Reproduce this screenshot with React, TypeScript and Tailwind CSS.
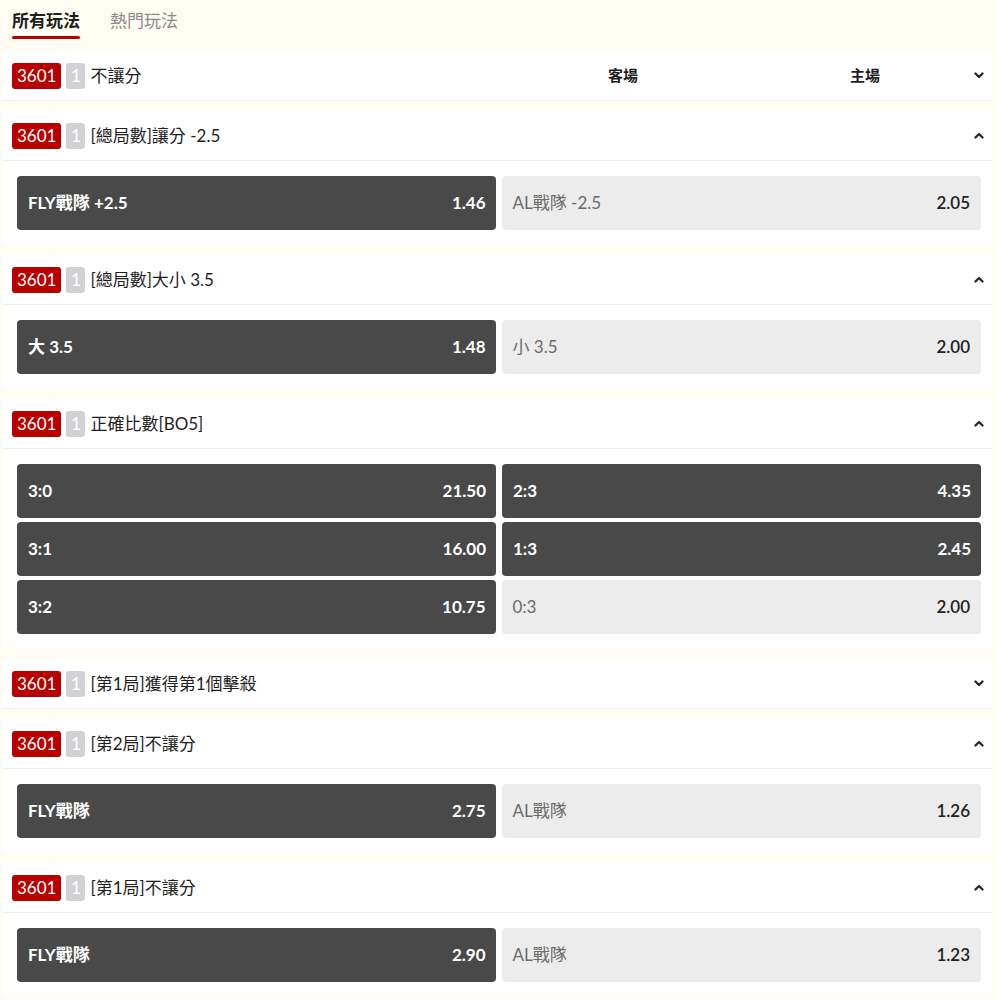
import React from 'react';

type Odd = { label: string; odds: string; active: boolean };
type Market = { title: string; open: boolean; rows?: Odd[][] };

const markets: Market[] = [
  { title: '不讓分', open: false },
  {
    title: '[總局數]讓分 -2.5',
    open: true,
    rows: [[{ label: 'FLY戰隊 +2.5', odds: '1.46', active: true }, { label: 'AL戰隊 -2.5', odds: '2.05', active: false }]],
  },
  {
    title: '[總局數]大小 3.5',
    open: true,
    rows: [[{ label: '大 3.5', odds: '1.48', active: true }, { label: '小 3.5', odds: '2.00', active: false }]],
  },
  {
    title: '正確比數[BO5]',
    open: true,
    rows: [
      [{ label: '3:0', odds: '21.50', active: true }, { label: '2:3', odds: '4.35', active: true }],
      [{ label: '3:1', odds: '16.00', active: true }, { label: '1:3', odds: '2.45', active: true }],
      [{ label: '3:2', odds: '10.75', active: true }, { label: '0:3', odds: '2.00', active: false }],
    ],
  },
  { title: '[第1局]獲得第1個擊殺', open: false },
  {
    title: '[第2局]不讓分',
    open: true,
    rows: [[{ label: 'FLY戰隊', odds: '2.75', active: true }, { label: 'AL戰隊', odds: '1.26', active: false }]],
  },
  {
    title: '[第1局]不讓分',
    open: true,
    rows: [[{ label: 'FLY戰隊', odds: '2.90', active: true }, { label: 'AL戰隊', odds: '1.23', active: false }]],
  },
];

const Chevron = ({ up }: { up: boolean }) => (
  <svg width="10" height="7" viewBox="0 0 10 7" className="shrink-0">
    <polyline
      points={up ? '1.5,5.5 5,2 8.5,5.5' : '1.5,1.5 5,5 8.5,1.5'}
      fill="none"
      stroke="#2a2a2a"
      strokeWidth="2.4"
      strokeLinecap="round"
      strokeLinejoin="round"
    />
  </svg>
);

const OddButton = ({ item }: { item: Odd }) => (
  <button
    className={
      item.active
        ? 'flex-1 h-[54px] rounded-[4px] bg-[#494949] flex items-center justify-between pl-[11px] pr-[10px] text-white font-bold'
        : 'flex-1 h-[54px] rounded-[4px] bg-[#ececec] flex items-center justify-between pl-[11px] pr-[11px]'
    }
  >
    <span className={item.active ? '' : 'text-[#6a6a6a]'}>{item.label}</span>
    <span className={item.active ? '' : 'text-[#222] font-semibold'}>{item.odds}</span>
  </button>
);

export default function App() {
  return (
    <div
      className="min-h-screen bg-[#fffcf3] text-[17px] text-[#1e1e1e] pb-[20px]"
      style={{ fontFamily: "Lato, 'Noto Sans CJK TC', 'Noto Sans', sans-serif" }}
    >
      {/* tabs */}
      <div className="flex items-start gap-[30px] pl-[12px] pt-[9px] h-[51px]">
        <div className="flex flex-col">
          <span className="font-bold leading-[24px]">所有玩法</span>
          <span className="mt-[3px] h-[3px] rounded-full bg-[#b50000]" />
        </div>
        <span className="text-[#8a8a8a] leading-[24px]">熱門玩法</span>
      </div>

      <div className="flex flex-col gap-[10px] pl-[3px] pr-[5px]">
        {markets.map((m, i) => (
          <div key={i} className="bg-white">
            <div className="h-[50px] flex items-center pl-[9px] pr-[8px] border-b border-[#f1efe8]">
              <span className="h-[26px] px-[5px] rounded-[3px] bg-[#b80000] text-white flex items-center leading-none">3601</span>
              <span className="ml-[5px] h-[26px] w-[19px] rounded-[3px] bg-[#d2d2d6] text-white flex items-center justify-center leading-none">1</span>
              <span className="ml-[5px] flex-1">{m.title}</span>
              {i === 0 && (
                <>
                  <span className="w-[100px] text-center font-bold text-[15px]">客場</span>
                  <span className="ml-[142px] w-[100px] text-center font-bold text-[15px]">主場</span>
                  <span className="w-[59px]" />
                </>
              )}
              <Chevron up={m.open} />
            </div>
            {m.open && m.rows && (
              <div className="flex flex-col gap-[4px] pt-[15px] pb-[15px] pl-[14px] pr-[11px]">
                {m.rows.map((row, r) => (
                  <div key={r} className="flex gap-[6px]">
                    {row.map((item, k) => (
                      <OddButton key={k} item={item} />
                    ))}
                  </div>
                ))}
              </div>
            )}
          </div>
        ))}
      </div>
    </div>
  );
}
